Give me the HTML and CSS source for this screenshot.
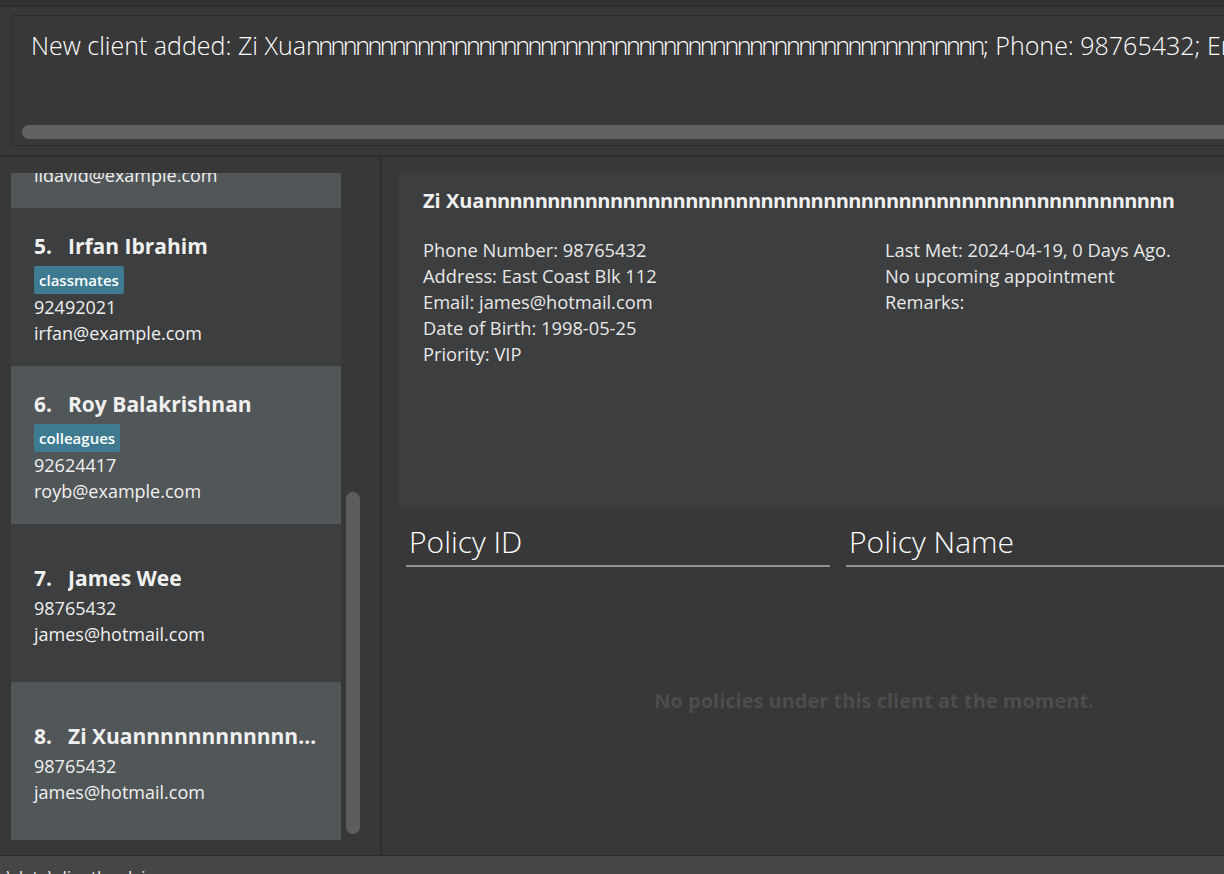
FILE: index.html
```html
<!DOCTYPE html>
<html>
<head>
<meta charset="utf-8">
<title>ClientBook</title>
<link rel="stylesheet" href="styles.css">
</head>
<body>
<div class="app">
  <div class="menubar"></div>
  <div class="result-pane">
    <div class="result-box">
      <div class="result-text">New client added: Zi Xua<span class="nrun">nnnnnnnnnnnnnnnnnnnnnnnnnnnnnnnnnnnnnnnnnnnnnnnnnnnnnnn</span>; Phone: 98765432; Email: james@hotmail.com; Address: East Coast Blk 112; Date of Birth: 1998-05-25; Priority: VIP</div>
      <div class="hscroll"></div>
    </div>
  </div>
  <div class="main">
    <div class="left">
      <div class="list">
        <div class="list-inner">
          <div class="cell even">
            <div class="cell-name"><span class="cell-id">4.</span><span class="cell-title">David Li</span></div>
            <div class="tags"><span class="tag">family</span></div>
            <div class="cell-line">91031282</div>
            <div class="cell-line">lidavid@example.com</div>
          </div>
          <div class="cell odd">
            <div class="cell-name"><span class="cell-id">5.</span><span class="cell-title">Irfan Ibrahim</span></div>
            <div class="tags"><span class="tag">classmates</span></div>
            <div class="cell-line">92492021</div>
            <div class="cell-line">irfan@example.com</div>
          </div>
          <div class="cell even">
            <div class="cell-name"><span class="cell-id">6.</span><span class="cell-title">Roy Balakrishnan</span></div>
            <div class="tags"><span class="tag">colleagues</span></div>
            <div class="cell-line">92624417</div>
            <div class="cell-line">royb@example.com</div>
          </div>
          <div class="cell odd">
            <div class="cell-name"><span class="cell-id">7.</span><span class="cell-title">James Wee</span></div>
            <div class="cell-line">98765432</div>
            <div class="cell-line">james@hotmail.com</div>
          </div>
          <div class="cell even">
            <div class="cell-name"><span class="cell-id">8.</span><span class="cell-title">Zi Xuannnnnnnnnnnnnnnnnnnnnnnnnnnnnnnnnnnnnnnnnnnnnnnnnnnnnnnn</span></div>
            <div class="cell-line">98765432</div>
            <div class="cell-line">james@hotmail.com</div>
          </div>
        </div>
      </div>
      <div class="vscroll"><div class="vthumb"></div></div>
    </div>
    <div class="right">
      <div class="detail-card">
        <div class="detail-name">Zi Xua<span class="nrun">nnnnnnnnnnnnnnnnnnnnnnnnnnnnnnnnnnnnnnnnnnnnnnnnnnnnnnn</span></div>
        <div class="detail-grid">
          <div class="detail-col">
            <div>Phone Number: 98765432</div>
            <div>Address: East Coast Blk 112</div>
            <div>Email: james@hotmail.com</div>
            <div>Date of Birth: 1998-05-25</div>
            <div>Priority: VIP</div>
          </div>
          <div class="detail-col">
            <div>Last Met: 2024-04-19, 0 Days Ago.</div>
            <div>No upcoming appointment</div>
            <div>Remarks:</div>
          </div>
        </div>
      </div>
      <div class="policy-table">
        <div class="policy-head">
          <div class="policy-col">Policy ID</div>
          <div class="policy-col">Policy Name</div>
        </div>
        <div class="policy-empty">No policies under this client at the moment.</div>
      </div>
    </div>
  </div>
  <div class="status">.\data\clientbook.json</div>
</div>
</body>
</html>
```

FILE: styles.css
```css
* {
  box-sizing: border-box;
}

html, body {
  margin: 0;
  padding: 0;
}

body {
  width: 1224px;
  height: 874px;
  overflow: hidden;
  background: #383838;
  font-family: "Open Sans", "Noto Sans", sans-serif;
  color: #f0f0f0;
}

.app {
  display: flex;
  flex-direction: column;
  width: 1224px;
  height: 874px;
}

.menubar {
  height: 7px;
  flex-shrink: 0;
  background: #333333;
  border-bottom: 2px solid #2c2c2c;
}

.result-pane {
  height: 148px;
  flex-shrink: 0;
  padding: 8px 0 0 12px;
  overflow: hidden;
}

.result-box {
  width: 1300px;
  height: 131px;
  border: 1px solid #2c2c2c;
  background: #383838;
  display: flex;
  flex-direction: column;
}

.result-text {
  padding: 13px 0 0 18px;
  font-size: 25px;
  font-weight: 300;
  line-height: 32px;
  white-space: nowrap;
  color: #ffffff;
}

.result-text .nrun {
  letter-spacing: -2.45px;
}

.hscroll {
  margin: auto 0 6px 9px;
  height: 14px;
  border-radius: 7px;
  background: #616161;
}

.main {
  display: flex;
  height: 700px;
  flex-shrink: 0;
  border-top: 2px solid #2e2e2e;
}

.left {
  width: 382px;
  flex-shrink: 0;
  display: flex;
  padding: 16px 0 0 11px;
  border-right: 2px solid #2e2e2e;
}

.list {
  width: 330px;
  height: 667px;
  overflow: hidden;
  flex-shrink: 0;
}

.list-inner {
  margin-top: -123px;
}

.cell {
  height: 158px;
  padding: 4px 12px 0 23px;
  display: flex;
  flex-direction: column;
  justify-content: center;
}

.cell.odd {
  background: #3c3e3f;
}

.cell.even {
  background: #515658;
}

.cell-name {
  display: flex;
  font-size: 21px;
  font-weight: 700;
  line-height: 28px;
  margin-bottom: 3px;
  color: #f0f0f0;
  white-space: nowrap;
  min-width: 0;
}

.cell-id {
  flex-shrink: 0;
  margin-right: 16px;
}

.cell-title {
  overflow: hidden;
  text-overflow: ellipsis;
  min-width: 0;
}

.tags {
  display: flex;
  margin-top: 3px;
  height: 28px;
}

.tag {
  background: #3e7b91;
  color: #ffffff;
  border-radius: 2px;
  padding: 0 5px;
  font-size: 15px;
  font-weight: 600;
  line-height: 28px;
}

.cell-line {
  font-size: 18px;
  line-height: 26px;
  color: #f0f0f0;
  white-space: nowrap;
}

.vscroll {
  width: 14px;
  margin-left: 5px;
  flex-shrink: 0;
}

.vthumb {
  margin-top: 319px;
  height: 342px;
  border-radius: 7px;
  background: #5d5d5d;
}

.right {
  flex-shrink: 0;
  width: 970px;
  padding: 16px 0 0 16px;
}

.detail-card {
  width: 952px;
  height: 334px;
  background: #3c3e3f;
  padding: 14px 25px 0 25px;
}

.detail-name {
  font-size: 20px;
  font-weight: 700;
  line-height: 28px;
  white-space: nowrap;
  color: #f0f0f0;
}

.detail-name .nrun {
  letter-spacing: -0.6px;
}

.detail-grid {
  display: grid;
  grid-template-columns: 462px 1fr;
  margin-top: 22px;
}

.detail-col {
  font-size: 18.3px;
  line-height: 26px;
  color: #e8e8e8;
  white-space: nowrap;
}

.policy-table {
  width: 952px;
}

.policy-head {
  display: flex;
  padding-top: 15px;
}

.policy-col {
  width: 424px;
  margin: 0 8px;
  padding: 0 0 3px 3px;
  font-size: 30px;
  font-weight: 300;
  line-height: 40px;
  color: #ffffff;
  border-bottom: 2px solid #909090;
}

.policy-empty {
  text-align: center;
  padding-top: 120px;
  font-size: 20px;
  font-weight: 700;
  line-height: 28px;
  color: #4d4d4d;
}

.status {
  flex: 1;
  border-top: 1px solid #2c2c2c;
  background: #464646;
  padding: 10px 0 0 2px;
  font-size: 17px;
  line-height: 22px;
  color: #f0f0f0;
  white-space: nowrap;
  overflow: hidden;
}
```
